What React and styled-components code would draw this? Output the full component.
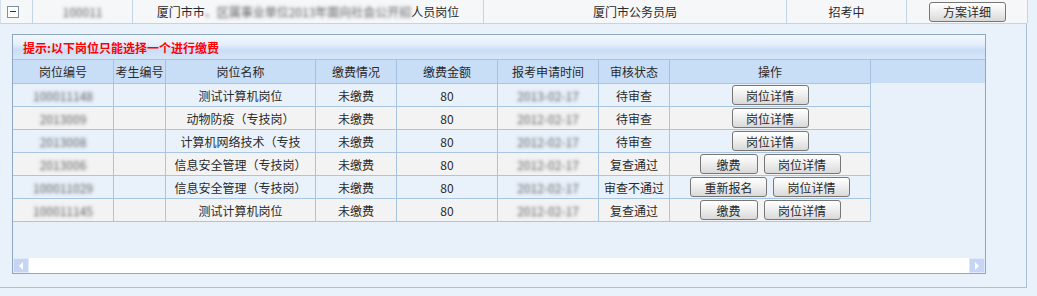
import React from 'react';
import styled, { createGlobalStyle } from 'styled-components';

const GlobalStyle = createGlobalStyle`
  html, body { margin: 0; padding: 0; background: #e9f2fb; }
  body {
    font-family: "Noto Sans CJK SC", "Noto Sans", "Liberation Sans", sans-serif;
    font-size: 12px;
    color: #2a2a2a;
  }
  * { box-sizing: border-box; }
`;

const Page = styled.div`
  width: 1027px;
`;

const TopRow = styled.div`
  display: grid;
  grid-template-columns: 32px 100px 351px 303px 120px 121px;
  height: 24px;
  background: #f6f7f9;
  border-bottom: 1px solid #c2d4e6;
  border-left: 1px solid #d5e0ea;
`;

const TopCell = styled.div`
  display: flex;
  align-items: center;
  justify-content: ${(p) => (p.$start ? 'flex-start' : 'center')};
  padding-left: ${(p) => (p.$start ? '6px' : '0')};
  border-right: 1px solid #c2d4e6;
  white-space: nowrap;
  overflow: hidden;
`;

const Toggle = styled.span`
  width: 12px;
  height: 12px;
  border: 1px solid #7d8fa5;
  background: #fff;
  display: flex;
  align-items: center;
  justify-content: center;
  &::after {
    content: '';
    width: 6px;
    height: 1px;
    background: #333;
  }
`;

const Blur = styled.span`
  display: inline-block;
  color: transparent;
  text-shadow: 0 0 3.5px rgba(70, 70, 70, 0.85);
`;

const Detail = styled.div`
  padding: 10px 40px 13px 12px;
  border-right: 1px solid #a9c1d8;
  border-bottom: 1px solid #a9c1d8;
`;

const Panel = styled.div`
  border: 1px solid #8fa8c2;
  background: #e8f1fa;
  display: flex;
  flex-direction: column;
`;

const TitleBar = styled.div`
  height: 25px;
  border-bottom: 1px solid #a8c3e0;
  background: linear-gradient(#f1f7fe 0%, #e4eefb 40%, #c9ddf5 62%, #d6e6f8 100%);
  display: flex;
  align-items: center;
  padding-left: 10px;
  color: #f00;
  font-weight: bold;
`;

const GridArea = styled.div`
  height: 198px;
`;

const HeaderRow = styled.div`
  display: flex;
  height: 23px;
  background: #c8ddf6;
`;

const COLS = [101, 52, 150, 81, 101, 101, 71, 201];

const HeadCell = styled.div`
  width: ${(p) => p.$w}px;
  flex: none;
  border-right: 1px solid #a6c2df;
  display: flex;
  align-items: center;
  justify-content: center;
`;

const BodyRow = styled.div`
  display: flex;
  width: 858px;
  height: 23px;
  background: ${(p) => (p.$alt ? '#f3f3f3' : '#e9f2fb')};
  border-top: 1px solid #a8c5e1;
`;

const Cell = styled.div`
  width: ${(p) => p.$w}px;
  flex: none;
  border-right: 1px solid #a8c5e1;
  display: flex;
  align-items: center;
  justify-content: center;
  gap: 6px;
  white-space: nowrap;
  overflow: hidden;
`;

const LastBorder = styled.div`
  width: 858px;
  border-top: 1px solid #a8c5e1;
`;

const Button = styled.button`
  width: ${(p) => p.$w}px;
  height: 20px;
  padding: 0;
  border: 1px solid #777;
  border-radius: 3px;
  background: linear-gradient(#ffffff 0%, #f0f0f0 45%, #d9d9d9 100%);
  font-family: inherit;
  font-size: 12px;
  color: #2a2a2a;
  display: flex;
  align-items: center;
  justify-content: center;
  flex: none;
`;

const ScrollBar = styled.div`
  height: 15px;
  background: #fff;
  display: flex;
  justify-content: space-between;
`;

const ArrowBtn = styled.div`
  width: 16px;
  height: 15px;
  background: #c6d5f4;
  border: 1px solid #e2e9fa;
  display: flex;
  align-items: center;
  justify-content: center;
`;

const Arrow = ({ dir }) => (
  <svg width="6" height="8" viewBox="0 0 6 8">
    {dir === 'left' ? (
      <polygon points="5,0 5,8 1,4" fill="#fff" />
    ) : (
      <polygon points="1,0 1,8 5,4" fill="#fff" />
    )}
  </svg>
);

const headers = ['岗位编号', '考生编号', '岗位名称', '缴费情况', '缴费金额', '报考申请时间', '审核状态', '操作'];

const rows = [
  { id: '100011148', name: '测试计算机岗位', date: '2013-02-17', status: '待审查', actions: ['岗位详情'] },
  { id: '2013009', name: '动物防疫（专技岗）', date: '2012-02-17', status: '待审查', actions: ['岗位详情'] },
  { id: '2013008', name: '计算机网络技术（专技', date: '2012-02-17', status: '待审查', actions: ['岗位详情'] },
  { id: '2013006', name: '信息安全管理（专技岗）', date: '2012-02-17', status: '复查通过', actions: ['缴费', '岗位详情'] },
  { id: '100011029', name: '信息安全管理（专技岗）', date: '2012-02-17', status: '审查不通过', actions: ['重新报名', '岗位详情'] },
  { id: '100011145', name: '测试计算机岗位', date: '2012-02-17', status: '复查通过', actions: ['缴费', '岗位详情'] },
];

export default function App() {
  return (
    <>
      <GlobalStyle />
      <Page>
        <TopRow>
          <TopCell $start><Toggle /></TopCell>
          <TopCell><Blur>100011</Blur></TopCell>
          <TopCell>
            厦门市市<Blur>、区属事业单位2013年面向社会公开招</Blur>人员岗位
          </TopCell>
          <TopCell>厦门市公务员局</TopCell>
          <TopCell>招考中</TopCell>
          <TopCell><Button $w={77}>方案详细</Button></TopCell>
        </TopRow>
        <Detail>
          <Panel>
            <TitleBar>提示:以下岗位只能选择一个进行缴费</TitleBar>
            <GridArea>
              <HeaderRow>
                {headers.map((h, i) => (
                  <HeadCell key={h} $w={COLS[i]}>{h}</HeadCell>
                ))}
              </HeaderRow>
              {rows.map((r, i) => (
                <BodyRow key={i} $alt={i % 2 === 1}>
                  <Cell $w={COLS[0]}><Blur>{r.id}</Blur></Cell>
                  <Cell $w={COLS[1]} />
                  <Cell $w={COLS[2]}>{r.name}</Cell>
                  <Cell $w={COLS[3]}>未缴费</Cell>
                  <Cell $w={COLS[4]}>80</Cell>
                  <Cell $w={COLS[5]}><Blur>{r.date}</Blur></Cell>
                  <Cell $w={COLS[6]}>{r.status}</Cell>
                  <Cell $w={COLS[7]}>
                    {r.actions.map((a) => (
                      <Button key={a} $w={a.length === 2 ? 58 : 77}>{a}</Button>
                    ))}
                  </Cell>
                </BodyRow>
              ))}
              <LastBorder />
            </GridArea>
            <ScrollBar>
              <ArrowBtn><Arrow dir="left" /></ArrowBtn>
              <ArrowBtn><Arrow dir="right" /></ArrowBtn>
            </ScrollBar>
          </Panel>
        </Detail>
      </Page>
    </>
  );
}
